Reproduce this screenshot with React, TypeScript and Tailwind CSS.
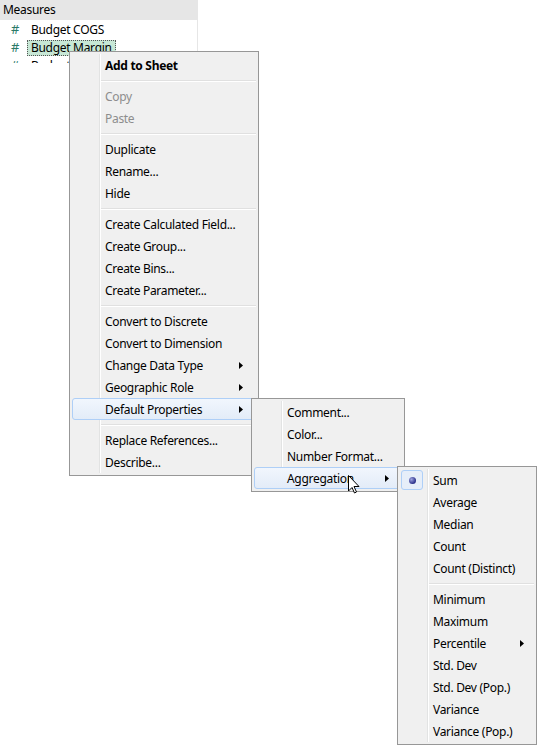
import React from "react"

type Item =
  | { sep: true }
  | { label: string; disabled?: boolean; bold?: boolean; sub?: boolean; active?: boolean; checked?: boolean }

const mainItems: Item[] = [
  { label: "Add to Sheet", bold: true },
  { sep: true },
  { label: "Copy", disabled: true },
  { label: "Paste", disabled: true },
  { sep: true },
  { label: "Duplicate" },
  { label: "Rename..." },
  { label: "Hide" },
  { sep: true },
  { label: "Create Calculated Field..." },
  { label: "Create Group..." },
  { label: "Create Bins..." },
  { label: "Create Parameter..." },
  { sep: true },
  { label: "Convert to Discrete" },
  { label: "Convert to Dimension" },
  { label: "Change Data Type", sub: true },
  { label: "Geographic Role", sub: true },
  { label: "Default Properties", sub: true, active: true },
  { sep: true },
  { label: "Replace References..." },
  { label: "Describe..." },
]

const propItems: Item[] = [
  { label: "Comment..." },
  { label: "Color..." },
  { label: "Number Format..." },
  { label: "Aggregation", sub: true, active: true },
]

const aggItems: Item[] = [
  { label: "Sum", checked: true },
  { label: "Average" },
  { label: "Median" },
  { label: "Count" },
  { label: "Count (Distinct)" },
  { sep: true },
  { label: "Minimum" },
  { label: "Maximum" },
  { label: "Percentile", sub: true },
  { label: "Std. Dev" },
  { label: "Std. Dev (Pop.)" },
  { label: "Variance" },
  { label: "Variance (Pop.)" },
]

function Arrow() {
  return (
    <svg width="4" height="7" viewBox="0 0 4 7" className="block">
      <path d="M0 0 L4 3.5 L0 7 Z" fill="#000" />
    </svg>
  )
}

function Menu({ items, className, arrowRight }: { items: Item[]; className: string; arrowRight: string }) {
  return (
    <div className={`absolute border border-[#979797] bg-[#f0f0f0] py-[2px] ${className}`}>
      {/* gutter */}
      <div className="absolute top-[2px] bottom-[2px] left-[29px] w-[2px] border-l border-[#e2e3e3] bg-[#ffffff] w-[1px]" />
      {items.map((it, i) =>
        "sep" in it ? (
          <div key={i} className="h-[9px] flex items-center pl-[30px] pr-[2px]">
            <div className="h-[2px] w-full border-t border-[#e0e0e0] bg-white" />
          </div>
        ) : (
          <div key={i} className="relative h-[22px] mx-[2px]">
            {it.active && (
              <div className="absolute inset-0 rounded-[3px] border border-[#aecff7] bg-gradient-to-b from-[#f1f6fd] to-[#e3ecf8]" />
            )}
            {it.checked && (
              <div className="absolute left-[1px] top-[1px] w-[22px] h-[20px] rounded-[3px] border border-[#aecff7] bg-[#e6eef9] flex items-center justify-center">
                <div className="w-[7px] h-[7px] rounded-full bg-[radial-gradient(circle_at_35%_35%,#9ea4e0,#2a2f8a_70%)]" />
              </div>
            )}
            <div
              className={`relative h-full flex items-center pl-[33px] pt-[2px] text-[12px] tracking-[-0.3px] leading-none ${
                it.disabled ? "text-[#8d8d8d]" : "text-[#000]"
              } ${it.bold ? "font-bold" : ""}`}
            >
              {it.label}
            </div>
            {it.sub && (
              <div className={`absolute top-[8px] ${arrowRight}`}>
                <Arrow />
              </div>
            )}
          </div>
        )
      )}
    </div>
  )
}

export default function App() {
  return (
    <div
      className="relative w-[540px] h-[746px] bg-white overflow-hidden"
      style={{ fontFamily: '"Noto Sans", "Segoe UI", sans-serif' }}
    >
      {/* Data pane */}
      <div className="w-[198px] h-[63px] border-r border-[#e6e6e6] overflow-hidden tracking-[-0.3px]">
        <div className="h-[20px] bg-[#e6e6e6] flex items-center pl-[3px] text-[12px] text-[#000]">Measures</div>
        <div className="flex flex-col pt-[1px]">
          <div className="h-[18px] flex items-center text-[12px]">
            <span className="w-[30px] pl-[11px] text-[#2b7a68] text-[13px]">#</span>
            <span className="px-[1px]">Budget COGS</span>
          </div>
          <div className="h-[18px] flex items-center text-[12px]">
            <span className="w-[27px] pl-[11px] text-[#2b7a68] text-[13px]">#</span>
            <span className="h-[16px] flex items-center px-[3px] bg-[#c7e7d5] border border-dotted border-[#555]">
              Budget Margin
            </span>
          </div>
          <div className="h-[18px] flex items-center text-[12px]">
            <span className="w-[30px] pl-[11px] text-[#2b7a68] text-[13px]">#</span>
            <span className="px-[1px]">Budget Profit</span>
          </div>
        </div>
      </div>

      <Menu items={mainItems} className="left-[69px] top-[51px] w-[190px]" arrowRight="right-[13px]" />
      <Menu items={propItems} className="left-[251px] top-[398px] w-[154px]" arrowRight="right-[13px]" />
      <Menu items={aggItems} className="left-[397px] top-[466px] w-[140px]" arrowRight="right-[10px]" />

      {/* mouse cursor */}
      <svg className="absolute left-[348px] top-[475px]" width="12" height="19" viewBox="0 0 12 19">
        <path d="M0.5 0.5 L0.5 16 L4 12.5 L6.5 18 L8.5 17 L6 11.5 L11 11.5 Z" fill="#fff" stroke="#000" strokeWidth="1" />
      </svg>
    </div>
  )
}
